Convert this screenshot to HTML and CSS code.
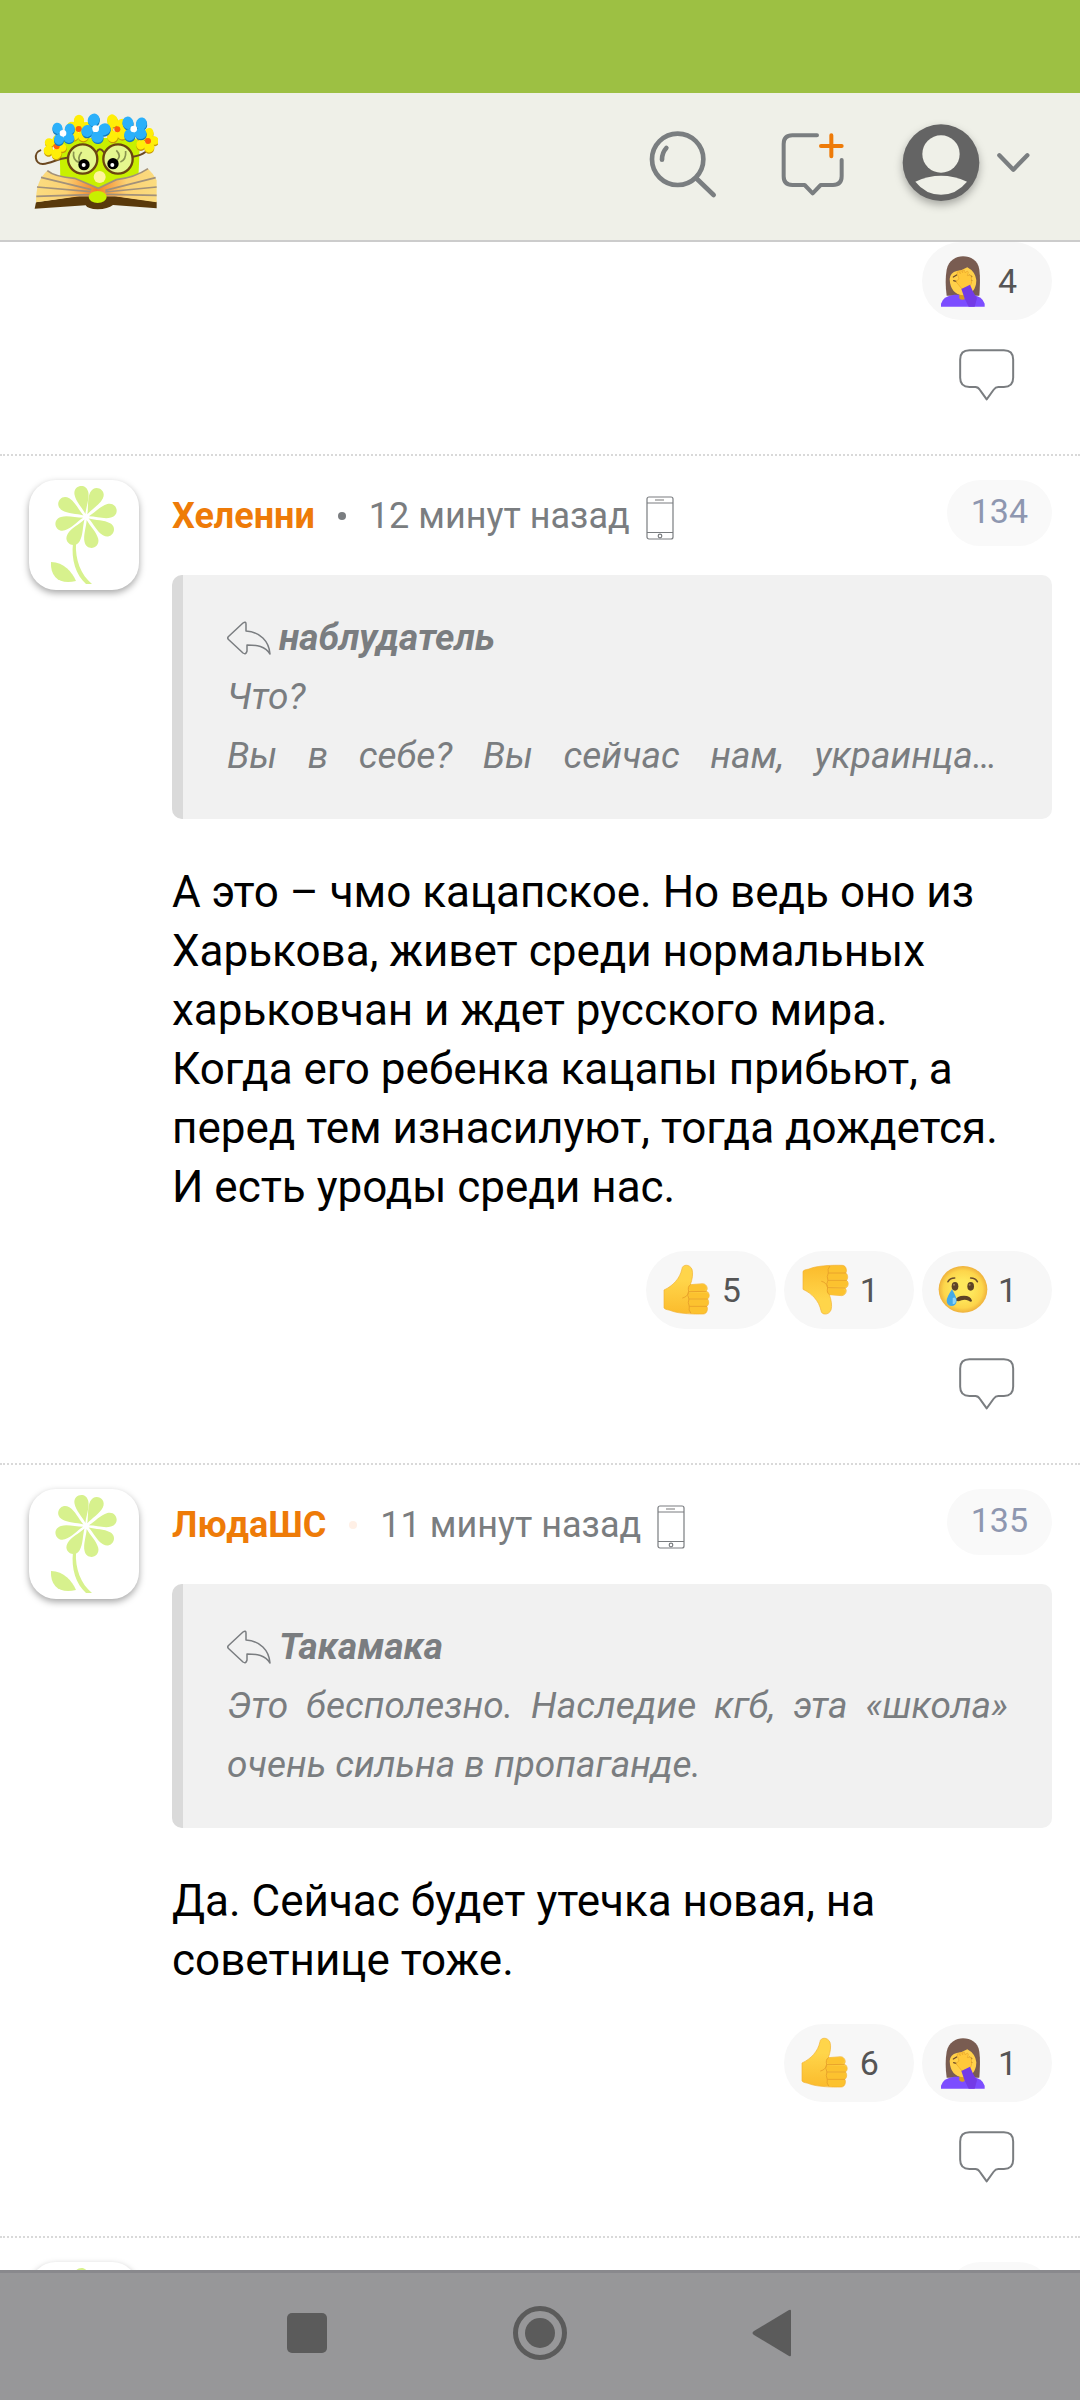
FILE: index.html
```
<!doctype html>
<html lang="ru">
<head>
    <meta charset="utf-8">
    <meta name="viewport" content="width=device-width, initial-scale=1">
    <title>Комментарии</title>
    <link rel="stylesheet" href="styles.css">
</head>
<body>
    <!-- Shared icons -->
    <svg class="sprite" aria-hidden="true">
        <defs>
            <linearGradient id="skin" x1="0" y1="0" x2="0" y2="1">
                <stop offset="0.3" stop-color="#ffd54a"/>
                <stop offset="1" stop-color="#fbbb2c"/>
            </linearGradient>
            <radialGradient id="face">
                <stop offset="0.4" stop-color="#fee75b"/>
                <stop offset="0.8" stop-color="#fdd54b"/>
                <stop offset="1" stop-color="#efb13c"/>
            </radialGradient>
            <g id="hand">
                <path fill="url(#skin)" stroke="#f3b233" stroke-width="2" d="M192 214 C218 202 240 180 246 150 C247 137 269 135 276 152 C280 165 277 182 271 198 L308 195 C322 196 325 213 318 217 C330 221 330 237 322 241 C328 245 327 260 320 263 C325 268 322 286 310 286 C280 287 240 285 218 278 C206 272 198 275 192 268 Z"/>
                <path fill="#fcc22f" d="M265 205 Q267 198 275 198 L310 197 Q319 199 318 208 Q317 216 308 216 L272 217 Q264 213 265 205 Z M268 222 H316 Q326 223 326 231 Q325 239 316 239 L270 239 Q263 231 268 222 Z M267 244 H314 Q324 244 324 252 Q322 261 314 261 L270 261 Q262 252 267 244 Z M270 265 H312 Q321 266 319 275 Q317 284 308 284 L275 284 Q265 276 270 265 Z"/>
                <path fill="none" stroke="#eaa42a" stroke-width="3" stroke-linecap="round" d="M271 198 Q262 204 266 218 Q260 230 267 241 Q262 252 268 263 Q264 274 272 283 M268 219 L318 218 M267 241 L322 241 M268 263 L320 263 M266 219 Q264 234 248 238"/>
            </g>
        </defs>
        <symbol id="thumb-up" viewBox="186 136 150 156"><use href="#hand"/></symbol>
        <symbol id="thumb-down" viewBox="600 136 150 156"><use href="#hand" transform="translate(417 426) scale(1 -1)"/></symbol>
        <symbol id="crying" viewBox="1016 136 150 156">
            <ellipse cx="1091" cy="212" rx="73" ry="70" fill="url(#face)"/>
            <ellipse cx="1067" cy="203" rx="10" ry="13" fill="#5d4226"/>
            <ellipse cx="1114" cy="203" rx="10" ry="13" fill="#5d4226"/>
            <circle cx="1064" cy="198" r="3" fill="#a08058"/>
            <circle cx="1111" cy="198" r="3" fill="#a08058"/>
            <path fill="none" stroke="#6b4c2b" stroke-width="5" stroke-linecap="round" d="M1046 189 Q1052 178 1066 178 M1114 178 Q1128 178 1134 189"/>
            <path fill="#5d4226" d="M1067 246 Q1072 231 1094 231 Q1114 231 1118 246 Q1116 252 1108 246 Q1094 239 1078 248 Z"/>
            <path fill="#43a9e8" d="M1058 212 Q1072 236 1072 246 A15 16 0 0 1 1042 246 Q1042 236 1058 212 Z"/>
            <path fill="#8ed4f8" d="M1060 238 Q1070 232 1070 246 Q1068 257 1060 256 Z"/>
        </symbol>
        <symbol id="facepalm" viewBox="1016 526 150 156">
            <path fill="#795c51" d="M1042 648 C1038 618 1038 592 1042 570 C1048 542 1070 530 1091 530 C1114 530 1136 542 1140 570 C1143 592 1142 620 1140 648 Z"/>
            <path fill="#7c4dff" d="M1025 681 V672 Q1030 650 1064 645 H1118 Q1150 650 1156 672 V681 Z"/>
            <path fill="#d99c1f" d="M1080 636 H1099 V654 Q1090 666 1080 656 Z"/>
            <path fill="#ffd04a" d="M1051 598 Q1053 578 1072 574 Q1090 572 1104 563 Q1128 576 1131 602 Q1130 644 1092 647 Q1053 644 1051 598 Z"/>
            <path fill="none" stroke="#6b4a2a" stroke-width="4" stroke-linecap="round" d="M1062 592 L1072 586 M1063 603 L1072 606 M1110 587 L1117 591 M1111 603 L1117 602"/>
            <path fill="#ffc83a" stroke="#e8a52b" stroke-width="2" stroke-linejoin="round" d="M1073 578 Q1077 572 1083 582 L1081 573 Q1085 568 1090 579 L1090 571 Q1096 568 1098 580 Q1104 570 1107 578 L1104 588 Q1118 582 1116 596 Q1120 614 1108 622 L1088 628 L1070 606 Q1074 600 1079 598 Z"/>
            <path fill="#733be6" d="M1086 628 L1112 615 Q1120 636 1133 656 L1126 681 H1108 Q1093 654 1086 628 Z"/>
        </symbol>
        <symbol id="reply" viewBox="1075 414 174 160">
            <path fill="none" stroke="#7a7d80" stroke-width="6" stroke-linejoin="round" d="M1109 421 H1213 Q1241 421 1241 449 V504 Q1241 532 1213 532 H1196 Q1188 532 1182 540 L1161 569 L1141 541 Q1135 532 1127 532 H1109 Q1081 532 1081 504 V449 Q1081 421 1109 421 Z"/>
        </symbol>
        <symbol id="quote-arrow" viewBox="0 0 44 34">
            <path fill="none" stroke="#7a7d80" stroke-width="1.5" stroke-linejoin="round" d="M1.5 15.5 L16 2 Q19 0 19 3 V10 C33 11 42 20 43 33 C38 25 30 24 20 24 V30 Q19 34 16 32 L1.5 18.5 Q0 17 1.5 15.5 Z"/>
        </symbol>
        <symbol id="phone" viewBox="0 0 28 44">
            <g fill="none" stroke="#7a7d80" stroke-width="1.2">
                <rect x="1" y="1" width="26" height="42" rx="2"/>
                <path d="M1 7 H27 M1 36.5 H27"/>
                <path stroke="#bbb" stroke-width="2" d="M9 4 H18"/>
                <circle cx="14" cy="40" r="1.8"/>
            </g>
        </symbol>
        <symbol id="flower" viewBox="0 0 110 110">
            <defs><path id="petal" d="M0 -3 C-2 -10 -7 -17 -7 -24 C-7 -34 7 -34 7 -24 C7 -17 2 -10 0 -3 Z"/></defs>
            <g fill="#d7f18d">
                <g transform="translate(57 37)">
                    <use href="#petal" transform="rotate(-11)"/>
                    <use href="#petal" transform="rotate(26)"/>
                    <use href="#petal" transform="rotate(75)"/>
                    <use href="#petal" transform="rotate(121)"/>
                    <use href="#petal" transform="rotate(167)"/>
                    <use href="#petal" transform="rotate(211)"/>
                    <use href="#petal" transform="rotate(254)"/>
                    <use href="#petal" transform="rotate(302)"/>
                </g>
                <path d="M44 63 C42 80 47 95 57 104 H63 C52 95 46 80 47 63 Z"/>
                <path d="M22 82 C35 82 43 92 47 101 C32 105 21 98 22 82 Z"/>
            </g>
        </symbol>
    </svg>

    <div class="status-bar"></div>

    <header class="header">
        <a class="logo" href="#" aria-label="На главную">
            <svg viewBox="100 95 375 327" width="125" height="109">
                <defs>
                    <linearGradient id="page" x1="0" x2="1">
                        <stop offset="0" stop-color="#fbdc80"/>
                        <stop offset="0.25" stop-color="#fbd274"/>
                        <stop offset="0.5" stop-color="#f58024"/>
                        <stop offset="0.75" stop-color="#fbd274"/>
                        <stop offset="1" stop-color="#fbdc80"/>
                    </linearGradient>
                    <g id="blossom">
                        <ellipse cx="-15" cy="-17" rx="15" ry="17" transform="rotate(-10)"/>
                        <ellipse cx="17" cy="-15" rx="15" ry="17" transform="rotate(10)"/>
                        <ellipse cx="17" cy="15" rx="16" ry="15"/>
                        <ellipse cx="-13" cy="19" rx="15" ry="16"/>
                    </g>
                    <g id="daisy">
                        <ellipse cx="0" cy="-21" rx="14" ry="17"/>
                        <ellipse cx="20" cy="-5" rx="15" ry="13"/>
                        <ellipse cx="12" cy="18" rx="15" ry="16"/>
                        <ellipse cx="-14" cy="17" rx="14" ry="15"/>
                        <ellipse cx="-19" cy="-6" rx="14" ry="13"/>
                    </g>
                </defs>
                <path fill="#c8f000" d="M180 190 Q182 175 200 174 L400 172 Q420 176 420 200 L416 300 L296 330 L182 300 Z"/>
                <g fill="none" stroke="#6b4820" stroke-width="6" stroke-linecap="round">
                    <path d="M122 210 C102 216 104 252 130 251 C155 248 175 235 202 232"/>
                    <path d="M400 229 Q425 225 436 216"/>
                    <path d="M291 215 Q300 198 312 215"/>
                </g>
                <g fill="#e5f78e" stroke="#6b4510" stroke-width="7">
                    <circle cx="249" cy="236" r="44"/>
                    <circle cx="355" cy="236" r="44"/>
                </g>
                <g fill="none" stroke="#8a9450" stroke-width="5">
                    <path d="M222 214 Q218 240 238 246 M246 215 Q230 235 244 248 M378 212 Q380 238 362 245 M350 210 Q366 226 352 240"/>
                </g>
                <circle cx="253" cy="253" r="17"/>
                <circle cx="340" cy="250" r="17"/>
                <circle cx="252" cy="254" r="6" fill="#fff"/>
                <circle cx="338" cy="254" r="6" fill="#fff"/>
                <path fill="#59390b" d="M109 366 L230 348 H350 L471 364 V384 L340 374 Q325 386 294 387 Q264 386 258 375 L105 385 Z"/>
                <path fill="url(#page)" d="M109 366 Q108 300 143 271 Q170 290 225 294 L296 324 L350 298 Q405 292 445 265 Q460 278 471 300 V366 L345 348 H240 Z"/>
                <g fill="none" stroke="#a2917a" stroke-width="5">
                    <path d="M143 271 Q165 290 225 294 L296 324 L350 298 Q405 292 445 265"/>
                    <path d="M124 291 L275 328 M112 320 L272 334 M110 348 L270 343 M468 292 L317 330 M471 320 L317 335 M471 345 L320 342"/>
                </g>
                <circle cx="300" cy="290" r="18" fill="#fff49b"/>
                <ellipse cx="294" cy="350" rx="27" ry="18" fill="#c8f000"/>
                <!-- wreath: darker copy below each flower as its edge -->
                <g fill="#c79a08">
                    <use href="#daisy" transform="translate(166 203) rotate(20)"/>
                    <use href="#daisy" transform="translate(238 149) scale(1.1)"/>
                    <use href="#daisy" transform="translate(348 148) rotate(-20) scale(1.15)"/>
                    <use href="#daisy" transform="translate(442 184) rotate(15)"/>
                </g>
                <g fill="#ffee08">
                    <use href="#daisy" transform="translate(165 199) rotate(20)"/>
                    <use href="#daisy" transform="translate(238 145) scale(1.1)"/>
                    <use href="#daisy" transform="translate(347 144) rotate(-20) scale(1.15)"/>
                    <use href="#daisy" transform="translate(442 180) rotate(15)"/>
                </g>
                <g fill="#ff5f08">
                    <circle cx="171" cy="198" r="9"/>
                    <circle cx="237" cy="146" r="9"/>
                    <circle cx="353" cy="147" r="9"/>
                    <circle cx="445" cy="182" r="9"/>
                </g>
                <g fill="#1378b8">
                    <use href="#blossom" transform="translate(191 162)"/>
                    <use href="#blossom" transform="translate(289 148) rotate(38) scale(1.15)"/>
                    <use href="#blossom" transform="translate(405 147) scale(1.1)"/>
                </g>
                <g fill="#2bb0fa">
                    <use href="#blossom" transform="translate(191 158)"/>
                    <use href="#blossom" transform="translate(288 144) rotate(38) scale(1.15)"/>
                    <use href="#blossom" transform="translate(404 143) scale(1.1)"/>
                </g>
                <g fill="#fff">
                    <circle cx="190" cy="159" r="10"/>
                    <circle cx="288" cy="145" r="10"/>
                    <circle cx="402" cy="146" r="10"/>
                </g>
            </svg>
        </a>
        <nav class="tools">
            <button class="tool" type="button" aria-label="Поиск">
                <svg viewBox="130 140 240 240" width="80" height="80" fill="none" stroke="#7a7e80" stroke-width="14" stroke-linecap="round">
                    <circle cx="234" cy="237" r="77"/>
                    <path d="M289 293 L342 344"/>
                    <path d="M200 203 Q187 217 187 238"/>
                </svg>
            </button>
            <button class="tool" type="button" aria-label="Новая тема">
                <svg viewBox="520 140 240 240" width="80" height="80" fill="none" stroke="#7a7e80" stroke-width="12" stroke-linecap="round" stroke-linejoin="round">
                    <path d="M655 165 H581 Q555 165 555 191 V288 Q555 314 581 314 H618 L642 339 L666 314 H703 Q729 314 729 288 V239"/>
                    <path stroke="#ee7b08" d="M698 165 V228 M667 197 H729"/>
                </svg>
            </button>
            <button class="tool profile" type="button" aria-label="Профиль">
                <svg class="user" viewBox="904 140 240 240" width="80" height="80">
                    <circle cx="1024" cy="247" r="115" fill="#646464"/>
                    <circle cx="1024" cy="221" r="56" fill="#eff0e8"/>
                    <path fill="#eff0e8" d="M947 304 Q1024 269 1102 304 Q1070 343 1024 343 Q978 343 947 304 Z"/>
                </svg>
                <svg viewBox="1180 140 120 240" width="40" height="80" fill="none" stroke="#7a7e80" stroke-width="13" stroke-linecap="round" stroke-linejoin="round">
                    <path d="M1199 225 L1241 268 L1283 225"/>
                </svg>
            </button>
        </nav>
    </header>

    <main class="feed">
        <article class="post post-tail">
            <div class="post-body">
                <div class="reactions">
                    <button class="reaction" type="button"><svg class="emoji"><use href="#facepalm"/></svg>4</button>
                </div>
                <button class="reply" type="button" aria-label="Ответить"><svg><use href="#reply"/></svg></button>
            </div>
        </article>

        <article class="post">
            <a class="avatar" href="#" aria-label="Хеленни"><svg><use href="#flower"/></svg></a>
            <div class="post-body">
                <div class="post-head">
                    <a class="author" href="#">Хеленни</a>
                    <span class="dot"></span>
                    <time>12 минут назад</time>
                    <svg class="phone"><use href="#phone"/></svg>
                    <a class="number" href="#">134</a>
                </div>
                <blockquote class="quote">
                    <a class="quote-author" href="#"><svg><use href="#quote-arrow"/></svg>наблудатель</a>
                    <p>Что?</p>
                    <p class="cut">Вы в себе? Вы сейчас нам, украинца…</p>
                </blockquote>
                <p class="text">А это – чмо кацапское. Но ведь оно из Харькова, живет среди нормальных харьковчан и ждет русского мира.<br>Когда его ребенка кацапы прибьют, а перед тем изнасилуют, тогда дождется.<br>И есть уроды среди нас.</p>
                <div class="reactions">
                    <button class="reaction" type="button"><svg class="emoji"><use href="#thumb-up"/></svg>5</button>
                    <button class="reaction" type="button"><svg class="emoji"><use href="#thumb-down"/></svg>1</button>
                    <button class="reaction" type="button"><svg class="emoji"><use href="#crying"/></svg>1</button>
                </div>
                <button class="reply" type="button" aria-label="Ответить"><svg><use href="#reply"/></svg></button>
            </div>
        </article>

        <article class="post">
            <a class="avatar" href="#" aria-label="ЛюдаШС"><svg><use href="#flower"/></svg></a>
            <div class="post-body">
                <div class="post-head">
                    <a class="author" href="#">ЛюдаШС</a>
                    <span class="dot dot-online"></span>
                    <time>11 минут назад</time>
                    <svg class="phone"><use href="#phone"/></svg>
                    <a class="number" href="#">135</a>
                </div>
                <blockquote class="quote">
                    <a class="quote-author" href="#"><svg><use href="#quote-arrow"/></svg>Такамака</a>
                    <p>Это бесполезно. Наследие кгб, эта «школа» очень сильна в пропаганде.</p>
                </blockquote>
                <p class="text">Да. Сейчас будет утечка новая, на советнице тоже.</p>
                <div class="reactions">
                    <button class="reaction" type="button"><svg class="emoji"><use href="#thumb-up"/></svg>6</button>
                    <button class="reaction" type="button"><svg class="emoji"><use href="#facepalm"/></svg>1</button>
                </div>
                <button class="reply" type="button" aria-label="Ответить"><svg><use href="#reply"/></svg></button>
            </div>
        </article>

        <article class="post">
            <a class="avatar" href="#" aria-label="Профиль автора"><svg><use href="#flower"/></svg></a>
            <div class="post-body">
                <div class="post-head"><span class="number"></span></div>
            </div>
        </article>
    </main>

    <nav class="system-nav">
        <button type="button" aria-label="Недавние">
            <svg viewBox="0 0 56 56"><rect x="8" y="8" width="40" height="40" rx="5"/></svg>
        </button>
        <button type="button" aria-label="Домой">
            <svg viewBox="0 0 56 56"><circle cx="28" cy="28" r="24.5" fill="none" stroke="#5b5b5b" stroke-width="5"/><circle cx="28" cy="28" r="15"/></svg>
        </button>
        <button type="button" aria-label="Назад">
            <svg viewBox="0 0 56 56"><path d="M9 26 L44 5 Q46 4 46 6 V50 Q46 52 44 51 L9 30 Q6 28 9 26 Z"/></svg>
        </button>
    </nav>
</body>
</html>
```

FILE: styles.css
```
* {
    box-sizing: border-box;
}

body {
    margin: 0;
    height: 100vh;
    display: flex;
    flex-direction: column;
    font-family: Roboto, sans-serif;
    font-size: 36px;
    line-height: 59px;
    color: #7a7d80;
    background-color: #fff;
}

button {
    margin: 0;
    padding: 0;
    border: 0;
    background: none;
    font: inherit;
    color: inherit;
}

a {
    color: inherit;
    text-decoration: none;
}

p {
    margin: 0;
}

svg {
    display: block;
    flex: none;
}

.sprite {
    position: absolute;
    width: 0;
    height: 0;
}

.status-bar {
    flex: none;
    height: 93px;
    background-color: #9dc043;
}

/* Header */

.header {
    flex: none;
    display: flex;
    align-items: center;
    justify-content: space-between;
    height: 149px;
    padding: 0 47px 0 33px;
    border-bottom: 2px solid #ccc;
    background-color: #eff0e8;
}

.tools {
    display: flex;
    gap: 49px;
}

.profile {
    display: flex;
    gap: 12px;
}

.user {
    overflow: visible;
    filter: drop-shadow(0 4px 4px rgba(0, 0, 0, .3));
}

/* Feed */

.feed {
    flex: 1;
    min-height: 0;
    overflow: hidden;
}

.post {
    display: flex;
    gap: 33px;
    padding: 24px 28px 53px 29px;
    border-top: 2px dotted #d9d9d9;
}

.post-tail {
    padding-top: 0;
    border-top: 0;
}

.avatar {
    flex: none;
    width: 110px;
    height: 110px;
    border-radius: 27px;
    background-color: #fff;
    box-shadow: 0 3px 7px rgba(0, 0, 0, .35);
}

.avatar svg {
    width: 110px;
    height: 110px;
}

.post-body {
    flex: 1;
    min-width: 0;
}

.post-head {
    display: flex;
    align-items: center;
    height: 72px;
    margin-bottom: 23px;
}

.author {
    font-weight: 700;
    color: #ee7b08;
}

.dot {
    width: 8px;
    height: 8px;
    margin: 0 23px;
    border-radius: 50%;
    background-color: #7a7d80;
}

.dot-online {
    background-color: #fff0e6;
}

.phone {
    width: 28px;
    height: 44px;
    margin: 4px 0 0 16px;
}

.number {
    align-self: flex-start;
    min-width: 105px;
    height: 66px;
    margin-left: auto;
    padding: 0 24px;
    border-radius: 33px;
    background-color: #f9f9f9;
    font-size: 34px;
    line-height: 62px;
    color: #8e97b0;
}

.quote {
    margin: 0 0 44px;
    padding: 33px 44px 34px;
    border-left: 11px solid #dadada;
    border-radius: 10px;
    background-color: #f1f1f1;
    font-size: 37px;
    font-style: italic;
    text-align: justify;
}

.quote-author {
    display: flex;
    align-items: center;
    gap: 8px;
    font-weight: 700;
}

.quote-author svg {
    width: 44px;
    height: 34px;
}

.cut {
    padding-right: 11px;
    text-align-last: justify;
}

.text {
    margin-bottom: 34px;
    font-size: 44px;
    color: #000;
}

.reactions {
    display: flex;
    justify-content: flex-end;
    gap: 8px;
}

.reaction {
    display: flex;
    align-items: center;
    gap: 10px;
    height: 78px;
    padding: 0 35px 0 16px;
    border-radius: 39px;
    background-color: #f7f7f7;
    font-size: 34px;
    color: #555;
}

.emoji {
    width: 50px;
    height: 52px;
}

.reply {
    display: block;
    margin: 28px 36px 0 auto;
}

.reply svg {
    width: 58px;
    height: 53px;
}

/* System navigation */

.system-nav {
    flex: none;
    display: flex;
    align-items: center;
    justify-content: center;
    gap: 177px;
    height: 130px;
    padding-bottom: 8px;
    border-top: 3px solid #89898d;
    background-color: #979799;
}

.system-nav svg {
    width: 56px;
    height: 56px;
    fill: #5b5b5b;
}
```
